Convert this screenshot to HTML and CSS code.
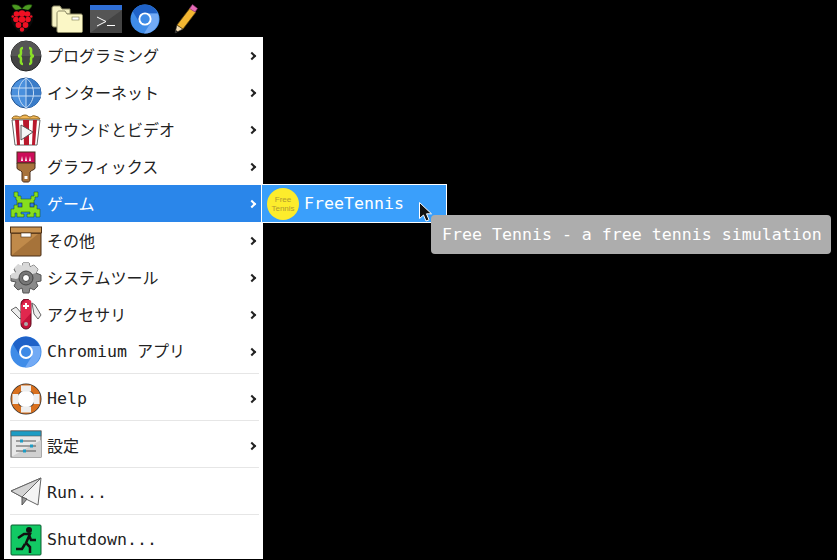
FILE: index.html
```html
<html>

<head>
    <meta charset="UTF-8">
    <title>Menu</title>
    <link rel="stylesheet" href="styles.css">
</head>

<body>
    <svg class="defs" width="0" height="0">
        <defs>
            <symbol id="chromium" viewBox="0 0 32 32">
                <circle cx="16" cy="16" r="15.5" fill="#3f8ce8" />
                <path d="M16 .5A15.5 15.5 0 0 0 3 8l6 10 7-8h13.5A15.5 15.5 0 0 0 16 .5z" fill="#1f62c8" />
                <path d="M29.5 10H16l6 10-7 11.500A15.500 15.500 0 0 0 29.500 10z" fill="#72aaf5" />
                <circle cx="16" cy="16" r="7" fill="#fff" />
                <circle cx="16" cy="16" r="5" fill="#3d8ae6" />
            </symbol>
        </defs>
    </svg>

    <div class="topbar">
        <svg class="launch berry" viewBox="0 0 24 29">
            <path d="M11 7C8 7 3 6 2 1c4-1 8 0 10 4 2-4 6-5 10-4-1 5-6 6-9 6z" fill="#4c9a22" stroke="#1f4d0c" stroke-width=".6" />
            <path d="M12 5c5 0 9 2 10.500 6 1 3 1 6-1 9-2 4-6 9-9.500 9s-7.500-5-9.500-9c-2-3-2-6-1-9C3 7 7 5 12 5z" fill="#0a0a0a" />
            <g fill="#ee1023">
                <circle cx="12" cy="9.500" r="3.200" />
                <circle cx="6.500" cy="10" r="2.800" />
                <circle cx="17.500" cy="10" r="2.800" />
                <circle cx="12" cy="15.500" r="3.200" />
                <circle cx="6" cy="15.500" r="2.800" />
                <circle cx="18" cy="15.500" r="2.800" />
                <circle cx="8.500" cy="21" r="2.900" />
                <circle cx="15.500" cy="21" r="2.900" />
                <circle cx="12" cy="25.500" r="2.200" />
                <circle cx="2.800" cy="12.500" r="1.300" />
                <circle cx="21.200" cy="12.500" r="1.300" />
            </g>
        </svg>
        <svg class="launch folder" viewBox="0 0 32 28">
            <path d="M1 3c0-1 1-2 2-2h6l2 3h8v5H7v13H3c-1 0-2-1-2-2z" fill="#f6f2c4" stroke="#8d8a66" />
            <path d="M6 8c0-1 1-2 2-2h6l2 3h14c1 0 1.500 1 1.500 2v15c0 1-.5 1.500-1.500 1.500H8c-1 0-2-.5-2-1.500z" fill="#fbf7c6" stroke="#8d8a66" />
            <rect x="21" y="12" width="7" height="3" fill="#fff" stroke="#8d8a66" stroke-width=".7" />
        </svg>
        <svg class="launch" viewBox="0 0 32 28">
            <rect width="32" height="28" rx="1" fill="#555" />
            <rect width="32" height="5" fill="#2f6fd6" />
            <path d="M0 28L32 5v23z" fill="#444" />
            <path d="M7 12l9 4.500-9 4.500" fill="none" stroke="#fff" />
            <path d="M17 20.500h8" stroke="#fff" />
        </svg>
        <svg class="launch chrome"><use href="#chromium" /></svg>
        <svg class="launch pencil" viewBox="0 0 24 30">
            <path d="M1 29l2-8 6 4z" fill="#f3dcb0" stroke="#333" stroke-width=".6" />
            <path d="M1 29l.8-3 2.200 1.500z" fill="#222" />
            <path d="M3 21L16 4l6 4L9 25z" fill="#f2b632" stroke="#5a4410" stroke-width=".7" />
            <path d="M15.500 4.500l3-4 5 4-2.500 3.500z" fill="#e66bb8" stroke="#80306a" stroke-width=".6" />
        </svg>
    </div>

    <div class="menu">
        <div class="item">
            <svg class="icon" viewBox="0 0 32 32">
                <circle cx="16" cy="16" r="15" fill="#444" stroke="#222" />
                <path d="M1 16a15 15 0 0 1 30 0z" fill="#555" />
                <path d="M13 8c-3 0-2 3-2 5 0 2-1 3-3 3 2 0 3 1 3 3 0 2-1 5 2 5M19 8c3 0 2 3 2 5 0 2 1 3 3 3-2 0-3 1-3 3 0 2 1 5-2 5" fill="none" stroke="#8be028" stroke-width="2.500" />
            </svg>
            <span class="label">プログラミング</span>
            <span class="arrow"></span>
        </div>
        <div class="item">
            <svg class="icon" viewBox="0 0 32 32">
                <circle cx="16" cy="16" r="15" fill="#4a90dd" stroke="#1d4e8c" />
                <path d="M16 1a15 15 0 0 1 0 30z" fill="#3a7cc8" />
                <path d="M2 11h28M1 19h30M16 1v30M16 1C6 8 6 24 16 31M16 1c10 7 10 23 0 30" fill="none" stroke="#c6dcf4" />
            </svg>
            <span class="label">インターネット</span>
            <span class="arrow"></span>
        </div>
        <div class="item">
            <svg class="icon" viewBox="0 0 32 32">
                <path d="M2 5c0-2 2-3 4-3s3 1 4 1 2-2 5-2 3 2 5 2 2-2 5-1 4 1 5 3z" fill="#f1b754" stroke="#8a6220" />
                <path d="M2 6h28l-3 25H5z" fill="#fff" stroke="#666" />
                <path d="M5 6h4l1 25H7zM13 6h6v25h-5zM23 6h4l-2 25h-3z" fill="#b8182c" />
                <path d="M11 11l12 7-12 8z" fill="#f4f4f4" stroke="#555" />
            </svg>
            <span class="label">サウンドとビデオ</span>
            <span class="arrow"></span>
        </div>
        <div class="item">
            <svg class="icon" viewBox="0 0 32 32">
                <rect x="7" y="1" width="18" height="11" fill="#cc0d59" stroke="#4b2f1c" />
                <path d="M11 10l1-5 1 5zM15 10l1-5 1 5zM19 10l1-5 1 5z" fill="#fff" />
                <path d="M7 12h18v5c0 2-4 2-5 4v8c0 1-1 2-2 2h-4c-1 0-2-1-2-2v-8c-1-2-5-2-5-4z" fill="#a8733c" stroke="#4b2f1c" />
                <rect x="14.500" y="25" width="3" height="3" fill="#fff" />
            </svg>
            <span class="label">グラフィックス</span>
            <span class="arrow"></span>
        </div>
        <div class="item active">
            <svg class="icon" viewBox="0 0 32 32">
                <path d="M4 4h4v4h3v3h10V8h3V4h4v5h-3v3h-1v5h3v4h3v8h-4v-4h-2v4h-7v-3h3v-2H11v2h3v3H7v-4H5v4H1v-8h3v-4h3v-5H6V9H4z" fill="#86de1f" stroke="#1d4d0c" stroke-width=".5" />
                <rect x="8" y="15" width="4" height="4" fill="#2f7fe0" stroke="#123" stroke-width=".6" />
                <rect x="20" y="15" width="4" height="4" fill="#2f7fe0" stroke="#123" stroke-width=".6" />
            </svg>
            <span class="label">ゲーム</span>
            <span class="arrow"></span>
        </div>
        <div class="item">
            <svg class="icon" viewBox="0 0 32 32">
                <rect x="1" y="8" width="30" height="23" rx="1" fill="#a6733a" stroke="#4b2f14" />
                <path d="M2 30V9h26z" fill="#c08a4a" />
                <rect x=".5" y="2" width="31" height="6" fill="#c89250" stroke="#4b2f14" />
                <rect x="11" y="8" width="10" height="4" fill="#fff" stroke="#4b2f14" stroke-width=".6" />
            </svg>
            <span class="label">その他</span>
            <span class="arrow"></span>
        </div>
        <div class="item">
            <svg class="icon" viewBox="0 0 32 32">
                <path d="M13 1h6l1 4 4-2 4 4-2 4 5 2v6l-5 1 2 4-4 4-4-2-1 5h-6l-1-5-4 2-4-4 2-4-5-1v-6l5-2-2-4 4-4 4 2z" fill="#8a8a8a" stroke="#555" />
                <path d="M13 1h6l1 4 4-2 4 4-2 4-20 6-5-1v-4l5-2-2-4 4-4 4 2z" fill="#d8d8d8" />
                <circle cx="16" cy="16" r="7" fill="#777" stroke="#444" />
                <circle cx="16" cy="16" r="3.500" fill="#fff" stroke="#444" />
            </svg>
            <span class="label">システムツール</span>
            <span class="arrow"></span>
        </div>
        <div class="item">
            <svg class="icon" viewBox="0 0 32 32">
                <path d="M1 11l5-3 8 9-4 3zM31 16l-6-10-3-2 2 11 4 5z" fill="#eee" stroke="#666" />
                <rect x="11" y="0" width="10" height="30" rx="5" fill="#c4123a" stroke="#5c0a1c" />
                <path d="M16 1h3a2 2 0 0 1 2 3v10L11 25V6z" fill="#e0284e" />
                <path d="M16 4v6M13 7h6" stroke="#fff" stroke-width="2" />
                <circle cx="16" cy="25" r="2" fill="#aaa" />
            </svg>
            <span class="label">アクセサリ</span>
            <span class="arrow"></span>
        </div>
        <div class="item">
            <svg class="icon"><use href="#chromium" /></svg>
            <span class="label"><span class="mono">Chromium </span>アプリ</span>
            <span class="arrow"></span>
        </div>
        <div class="sep"></div>
        <div class="item">
            <svg class="icon" viewBox="0 0 32 32">
                <circle cx="16" cy="16" r="12" fill="none" stroke="#333" stroke-width="7" />
                <circle cx="16" cy="16" r="12" fill="none" stroke="#d8701e" stroke-width="5.500" />
                <path d="M11 5.500l10 0M11 26.500l10 0M5.500 11v10M26.500 11v10" stroke="#eee" stroke-width="6" />
            </svg>
            <span class="label mono">Help</span>
            <span class="arrow"></span>
        </div>
        <div class="sep"></div>
        <div class="item">
            <svg class="icon" viewBox="0 0 32 32">
                <rect x="1" y="1" width="30" height="26" fill="#e8e8e8" stroke="#555" />
                <path d="M1 27L31 10v17z" fill="#d0d0d0" />
                <rect x="1" y="1" width="30" height="5" fill="#1d9cc4" stroke="#555" stroke-width=".6" />
                <path d="M6 11h20M6 16h20M6 21h20" stroke="#555" />
                <path d="M10 9.500h3v3h-3zM20 14.500h3v3h-3zM13 19.500h3v3h-3z" fill="#1d9cc4" />
            </svg>
            <span class="label">設定</span>
            <span class="arrow"></span>
        </div>
        <div class="sep"></div>
        <div class="item">
            <svg class="icon" viewBox="0 0 32 32">
                <path d="M31 1L1 14l11 6 16 8z" fill="#f4f4f4" stroke="#666" />
                <path d="M31 1L1 14l11 6z" fill="#d4d4d4" stroke="#666" />
                <path d="M12 20v8l5-6z" fill="#999" stroke="#555" />
            </svg>
            <span class="label mono">Run...</span>
        </div>
        <div class="sep"></div>
        <div class="item">
            <svg class="icon" viewBox="0 0 32 32">
                <rect x="1" y="1" width="30" height="30" rx="1" fill="#12c964" stroke="#0a5c30" />
                <circle cx="19" cy="6" r="3" fill="#111" />
                <path d="M8 14l6-4h6l-4 9 4 4v6M15 20l-3 5H6M19 11l2 5h5" fill="none" stroke="#111" stroke-width="2.500" />
            </svg>
            <span class="label mono">Shutdown...</span>
        </div>
    </div>

    <div class="submenu">
        <div class="ball">Free<br>Tennis</div>
        <span class="mono sub-label">FreeTennis</span>
    </div>

    <svg class="cursor" viewBox="0 0 13 20">
        <path d="M.5.5v16l4-3.500 2.500 6 3-1.200-2.500-6h5z" fill="#111" stroke="#fff" />
    </svg>

    <div class="tooltip">Free Tennis - a free tennis simulation</div>
</body>

</html>
```

FILE: styles.css
```css
html {
    height: 100%;
}

body {
    height: 100%;
    margin: 0;
    overflow: hidden;
    font: 16px/1.25 "DejaVu Sans Mono", "Noto Sans CJK JP", monospace;
    color: #222;
    background-color: #000;
}

.defs {
    position: absolute;
}

.topbar {
    height: 37px;
    display: flex;
    align-items: center;
}

.launch {
    width: 32px;
    height: 28px;
    flex: none;
}

.berry {
    width: 24px;
    height: 29px;
    margin-left: 10px;
    margin-right: 17px;
}

.folder {
    margin-right: 7px;
}

.chrome {
    width: 30px;
    height: 30px;
    margin-left: 8px;
    margin-right: 14px;
}

.pencil {
    width: 24px;
    height: 30px;
}

.menu {
    width: 257px;
    height: 522px;
    margin-left: 4px;
    padding: 0 1px;
    background-color: #fff;
}

.item {
    height: 37px;
    padding-left: 5px;
    padding-right: 6px;
    display: flex;
    align-items: center;
}

.active {
    background-color: #2a86ea;
    color: #fff;
}

.active .arrow {
    border-color: #fff;
}

.icon {
    width: 32px;
    height: 32px;
    flex: none;
    margin-right: 5px;
}

.label {
    flex: 1;
    padding-top: 2px;
}

.mono,
.tooltip {
    font-size: 16.6px;
}

.arrow {
    width: 4px;
    height: 4px;
    margin-right: 1px;
    border-top: 2px solid #222;
    border-right: 2px solid #222;
    transform: rotate(45deg);
}

.sep {
    height: 1px;
    margin: 3px 3px 6px 5px;
    background-color: #e6e6e6;
}

.submenu {
    position: absolute;
    left: 261px;
    top: 184px;
    width: 184px;
    height: 37px;
    border: 1px solid #fff;
    background-color: #3a9ffb;
    color: #fff;
    display: flex;
    align-items: center;
}

.sub-label {
    padding-top: 2px;
}

.ball {
    width: 32px;
    height: 32px;
    margin-left: 5px;
    margin-right: 5px;
    border-radius: 50%;
    background-color: #fdec2c;
    color: #b09a30;
    font: 8px/9px "Liberation Sans", sans-serif;
    display: flex;
    align-items: center;
    justify-content: center;
    text-align: center;
}

.cursor {
    position: absolute;
    left: 419px;
    top: 202px;
    width: 13px;
    height: 20px;
}

.tooltip {
    position: absolute;
    left: 431px;
    top: 215px;
    width: 400px;
    height: 39px;
    line-height: 39px;
    box-sizing: border-box;
    padding-left: 11px;
    border-radius: 4px;
    background-color: #adadad;
    color: #fff;
    white-space: pre;
}
```
